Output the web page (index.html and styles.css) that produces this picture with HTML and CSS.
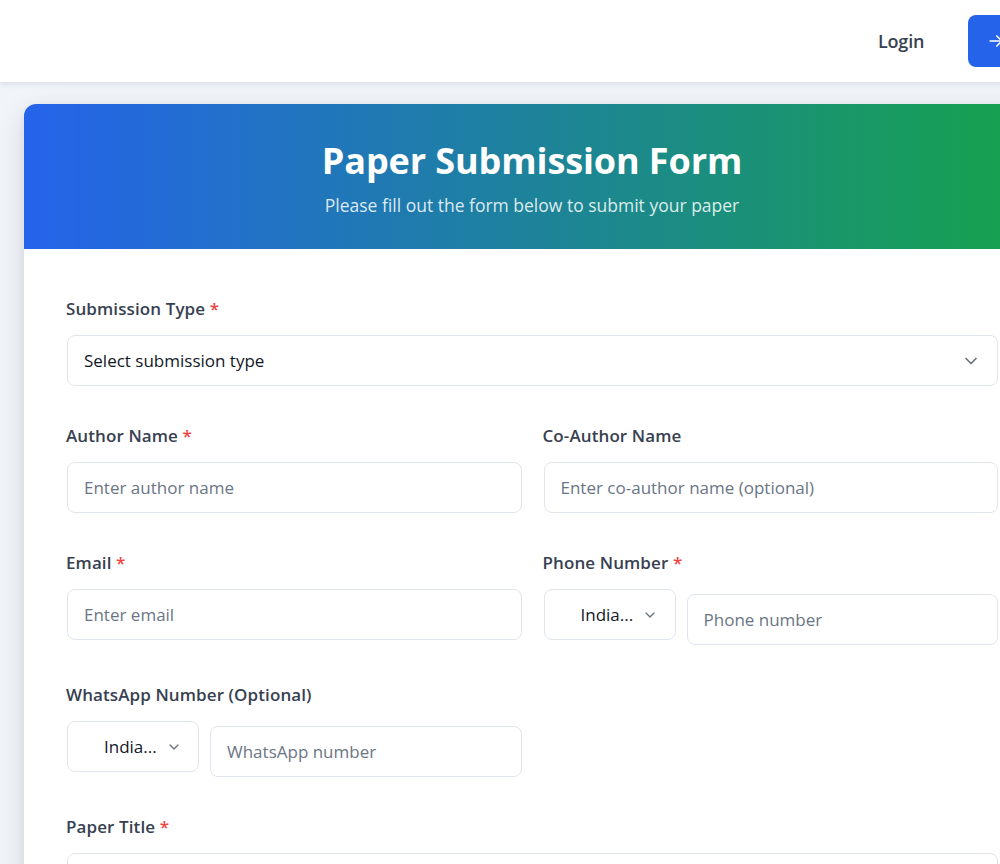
FILE: index.html
```html
<!DOCTYPE html>
<html lang="en">
<head>
<meta charset="utf-8">
<title>Paper Submission</title>
<link rel="stylesheet" href="styles.css">
</head>
<body>
<header class="topbar">
  <nav class="topbar-actions">
    <a class="login-link" href="#">Login</a>
    <a class="register-btn" href="#">
      <svg class="btn-icon" viewBox="0 0 24 24" width="20" height="20" fill="none" stroke="currentColor" stroke-width="2" stroke-linecap="round" stroke-linejoin="round"><path d="M5 12h14"/><path d="M13 6l6 6-6 6"/></svg>
      <span>Register</span>
    </a>
  </nav>
</header>

<main class="page">
  <section class="card">
    <div class="card-head">
      <h1>Paper Submission Form</h1>
      <p>Please fill out the form below to submit your paper</p>
    </div>

    <form class="card-body">
      <div class="field">
        <label>Submission Type <span class="req">*</span></label>
        <div class="control select">
          <span class="value">Select submission type</span>
          <svg class="chev" viewBox="0 0 24 24" width="20" height="20" fill="none" stroke="currentColor" stroke-width="2" stroke-linecap="round" stroke-linejoin="round"><path d="M6 9l6 6 6-6"/></svg>
        </div>
      </div>

      <div class="row">
        <div class="field">
          <label>Author Name <span class="req">*</span></label>
          <div class="control"><span class="placeholder">Enter author name</span></div>
        </div>
        <div class="field">
          <label>Co-Author Name</label>
          <div class="control"><span class="placeholder">Enter co-author name (optional)</span></div>
        </div>
      </div>

      <div class="row">
        <div class="field">
          <label>Email <span class="req">*</span></label>
          <div class="control"><span class="placeholder">Enter email</span></div>
        </div>
        <div class="field">
          <label>Phone Number <span class="req">*</span></label>
          <div class="phone">
            <div class="control country">
              <span class="value">India...</span>
              <svg class="chev small" viewBox="0 0 24 24" width="16" height="16" fill="none" stroke="currentColor" stroke-width="2" stroke-linecap="round" stroke-linejoin="round"><path d="M6 9l6 6 6-6"/></svg>
            </div>
            <div class="control number"><span class="placeholder">Phone number</span></div>
          </div>
        </div>
      </div>

      <div class="row">
        <div class="field">
          <label>WhatsApp Number (Optional)</label>
          <div class="phone">
            <div class="control country">
              <span class="value">India...</span>
              <svg class="chev small" viewBox="0 0 24 24" width="16" height="16" fill="none" stroke="currentColor" stroke-width="2" stroke-linecap="round" stroke-linejoin="round"><path d="M6 9l6 6 6-6"/></svg>
            </div>
            <div class="control number"><span class="placeholder">WhatsApp number</span></div>
          </div>
        </div>
        <div class="field"></div>
      </div>

      <div class="field">
        <label>Paper Title <span class="req">*</span></label>
        <div class="control"><span class="placeholder">Enter paper title</span></div>
      </div>
    </form>
  </section>
</main>
</body>
</html>
```

FILE: styles.css
```css
* {
  box-sizing: border-box;
}

html, body {
  margin: 0;
  padding: 0;
}

body {
  font-family: "Open Sans", "Noto Sans", sans-serif;
  background: #f1f4f9;
  color: #1f2937;
  width: 1064px;
}

a {
  text-decoration: none;
}

/* top navigation */
.topbar {
  height: 82px;
  background: #ffffff;
  box-shadow: 0 2px 6px rgba(15, 23, 42, 0.1);
  display: flex;
  align-items: center;
  padding-left: 878px;
  position: relative;
  z-index: 2;
}

.topbar-actions {
  display: flex;
  align-items: center;
  gap: 44px;
}

.login-link {
  font-size: 18px;
  font-weight: 600;
  color: #374151;
  letter-spacing: -0.2px;
}

.register-btn {
  display: flex;
  align-items: center;
  gap: 8px;
  height: 52px;
  padding: 0 18px;
  background: #2563eb;
  color: #ffffff;
  border-radius: 8px;
  font-weight: 600;
  font-size: 16px;
  white-space: nowrap;
}

.btn-icon {
  flex-shrink: 0;
}

/* page */
.page {
  padding: 22px 0 40px 24px;
}

.card {
  width: 1016px;
  background: #ffffff;
  border-radius: 12px;
  overflow: hidden;
  box-shadow: 0 10px 30px rgba(15, 23, 42, 0.12), 0 2px 8px rgba(15, 23, 42, 0.06);
}

.card-head {
  height: 145px;
  background: linear-gradient(to right, #2563eb, #16a34a);
  color: #ffffff;
  text-align: center;
  padding-top: 34px;
}

.card-head h1 {
  margin: 0;
  font-size: 36px;
  line-height: 46px;
  font-weight: 700;
  letter-spacing: -0.1px;
}

.card-head p {
  margin: 10px 0 0;
  font-size: 17.5px;
  line-height: 22px;
  color: rgba(255, 255, 255, 0.85);
}

/* form */
.card-body {
  padding: 48px 42px 40px 43px;
  display: flex;
  flex-direction: column;
  gap: 38px;
}

.row {
  display: grid;
  grid-template-columns: 1fr 1fr;
  column-gap: 22px;
}

.field label {
  display: block;
  font-size: 17px;
  line-height: 24px;
  font-weight: 600;
  color: #374151;
  margin-bottom: 14px;
  margin-left: -1px;
  letter-spacing: 0.1px;
}

.req {
  color: #ef4444;
}

.control {
  height: 51px;
  border: 1px solid #e0e5ee;
  border-radius: 8px;
  background: #ffffff;
  display: flex;
  align-items: center;
  padding: 0 16px;
  font-size: 17px;
}

.placeholder {
  color: #6b7585;
}

.value {
  color: #111827;
}

.select {
  justify-content: space-between;
}

.chev {
  color: #6b7280;
  margin-right: 0;
}

.phone {
  display: flex;
  align-items: flex-start;
  gap: 11px;
}

.country {
  width: 132px;
  flex-shrink: 0;
  padding-left: 36px;
  padding-right: 0;
  gap: 9px;
}

.chev.small {
  margin: 0;
}

.number {
  flex: 1;
  margin-top: 5px;
}
```
